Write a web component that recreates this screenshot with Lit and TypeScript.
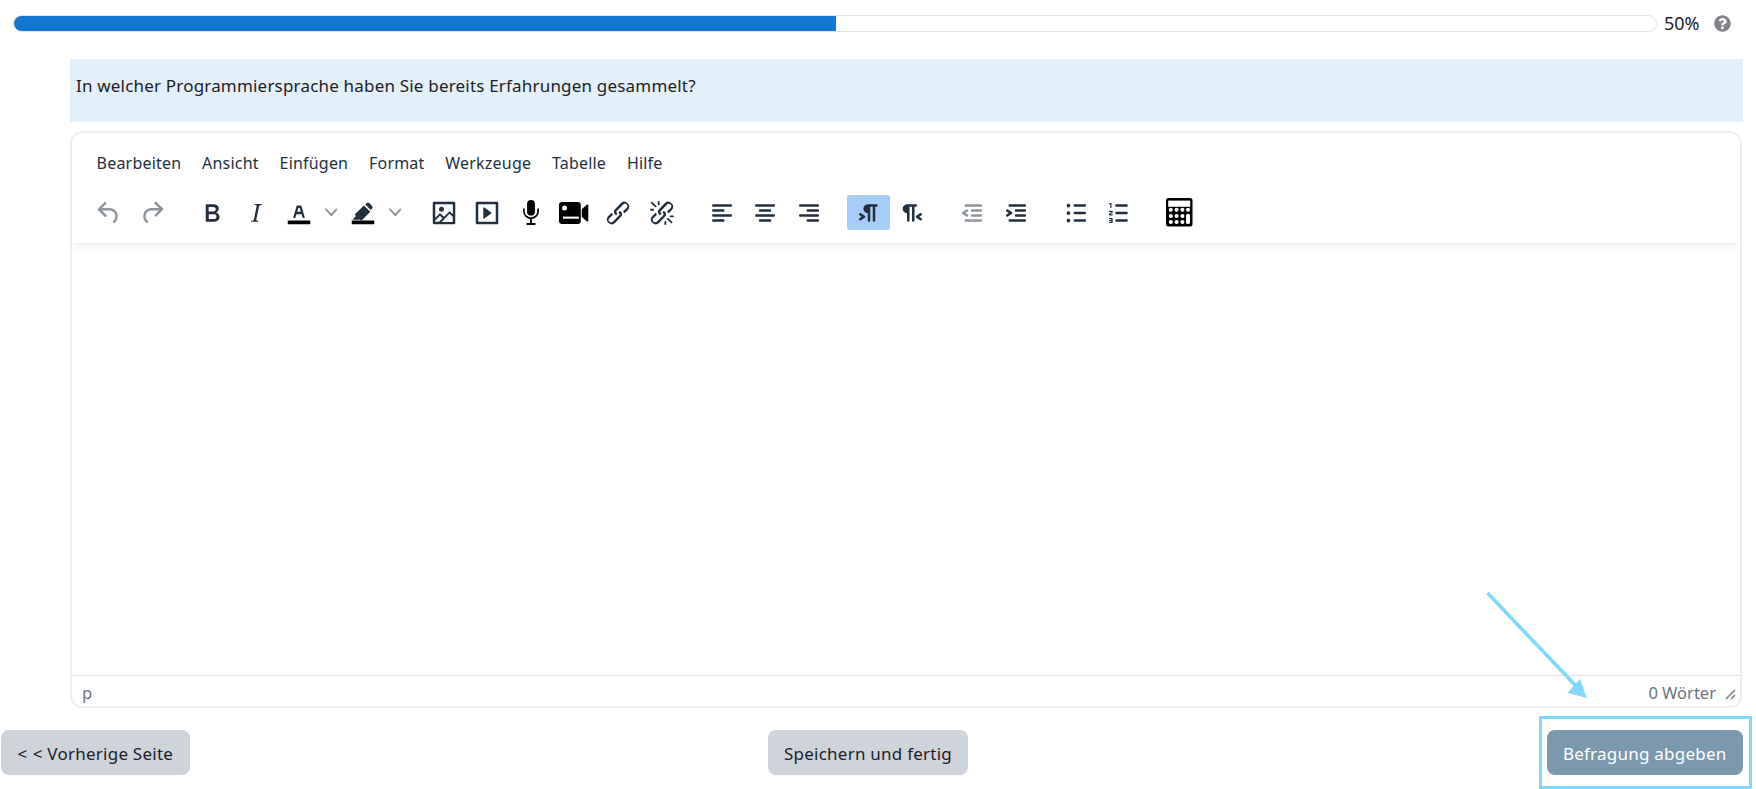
import { LitElement, html, css, svg } from "lit";
import { customElement } from "lit/decorators.js";

const P: Record<string, string> = {
  undo: "M6.4 8H12c3.7 0 6.2 2 6.8 5.1.6 2.7-.4 5.6-2.3 6.8a1 1 0 0 1-1-1.8c1.1-.6 1.8-2.7 1.4-4.6-.5-2.1-2.1-3.5-4.9-3.5H6.4l3.3 3.3a1 1 0 1 1-1.4 1.4l-5-5a1 1 0 0 1 0-1.4l5-5a1 1 0 0 1 1.4 1.4L6.4 8Z",
  redo: "M17.6 10H12c-2.8 0-4.4 1.4-4.9 3.5-.4 2 .3 4 1.4 4.6a1 1 0 1 1-1 1.8c-2-1.2-2.9-4.1-2.3-6.8.6-3 3-5.1 6.8-5.1h5.6l-3.3-3.3a1 1 0 1 1 1.4-1.4l5 5a1 1 0 0 1 0 1.4l-5 5a1 1 0 0 1-1.4-1.4l3.3-3.3Z",
  bold: "M7.8 19c-.3 0-.5 0-.6-.2l-.2-.5V5.7c0-.2 0-.4.2-.5l.6-.2h5c1.5 0 2.7.3 3.5 1 .7.6 1.1 1.4 1.1 2.5a3 3 0 0 1-.6 1.9c-.4.6-1 1-1.6 1.2.4.1.9.3 1.3.6s.8.7 1 1.2c.4.4.5 1 .5 1.6 0 1.3-.4 2.3-1.3 3-.8.7-2.1 1-3.8 1H7.8Zm5-8.3c.6 0 1.2-.1 1.6-.5.4-.3.6-.7.6-1.3 0-1.1-.8-1.7-2.3-1.7H9.3v3.5h3.4Zm.5 6c.7 0 1.3-.1 1.7-.4.4-.4.6-.9.6-1.5s-.2-1-.7-1.4c-.4-.3-1-.4-2-.4H9.4v3.8h4Z",
  italic: "M16.7 4.7l-.1.9h-.3c-.6 0-1 0-1.4.3-.3.3-.4.6-.5 1.1l-2.1 9.8v.6c0 .5.4.8 1.4.8h.2l-.2.8H8l.2-.8h.2c1.1 0 1.8-.5 2-1.5l2-9.8.1-.5c0-.6-.4-.8-1.4-.8h-.3l.2-.9h5.8Z",
  textcolor: "M8.7 16h-.8a.5.5 0 0 1-.5-.6l2.7-9c.1-.3.3-.4.5-.4h2.8c.2 0 .4.1.5.4l2.7 9a.5.5 0 0 1-.5.6h-.8a.5.5 0 0 1-.4-.4l-.7-2.2c0-.3-.3-.4-.5-.4h-3.4c-.2 0-.4.1-.5.4l-.7 2.2c0 .3-.2.4-.4.4Zm2.6-7.6-.6 2a.5.5 0 0 0 .5.6h1.6a.5.5 0 0 0 .5-.6l-.6-2c0-.3-.3-.4-.5-.4h-.4c-.2 0-.4.1-.5.4Z",
  pen: "M3.6 17.3 6.4 14.4 5.9 13.9a1 1 0 0 1 0-1.4L12.8 6l5 5-6.5 6.6a1 1 0 0 1-1.4 0l-.5-.5-.7.2H3.6Zm10.2-12.2.9-.9a1.8 1.8 0 0 1 2.5 0l1.9 1.9a1.8 1.8 0 0 1 0 2.5l-.9.9-4.4-4.4Z",
  image: "M5 15.7l3.3-3.2c.3-.3.7-.3 1 0L12 15l4.1-4c.3-.4.8-.4 1 0l2 1.9V5H5v10.7ZM5 18V19h3l2.8-2.9-2-2L5 17.9Zm14-3-2.5-2.4-6.4 6.5H19v-4ZM4 3h16c.6 0 1 .4 1 1v16c0 .6-.4 1-1 1H4a1 1 0 0 1-1-1V4c0-.6.4-1 1-1Zm6 8a2 2 0 1 0 0-4 2 2 0 0 0 0 4Z",
  play: "M4 3h16c.6 0 1 .4 1 1v16c0 .6-.4 1-1 1H4a1 1 0 0 1-1-1V4c0-.6.4-1 1-1Zm1 2v14h14V5H5Zm4.8 2.6 5.6 4a.5.5 0 0 1 0 .8l-5.6 4A.5.5 0 0 1 9 16V8a.5.5 0 0 1 .8-.4Z",
  link: "M6.2 12.3a1 1 0 0 1 1.4 1.4l-2 2a2 2 0 1 0 2.6 2.8l4.8-4.8a1 1 0 0 0 0-1.4 1 1 0 1 1 1.4-1.3 2.9 2.9 0 0 1 0 4L9.6 20a3.9 3.9 0 0 1-5.5-5.5l2-2Zm11.6-.6a1 1 0 0 1-1.4-1.4l2-2a2 2 0 1 0-2.6-2.8L11 10.3a1 1 0 0 0 0 1.4A1 1 0 1 1 9.6 13a2.9 2.9 0 0 1 0-4L14.4 4a3.9 3.9 0 0 1 5.5 5.5l-2 2Z",
  unlink: "M6.2 12.3a1 1 0 0 1 1.4 1.4l-2.1 2a2 2 0 1 0 2.7 2.8l4.8-4.8a1 1 0 0 0 0-1.4 1 1 0 1 1 1.4-1.3 2.9 2.9 0 0 1 0 4L9.6 20a3.9 3.9 0 0 1-5.5-5.5l2-2Zm11.6-.6a1 1 0 0 1-1.4-1.4l2.1-2a2 2 0 1 0-2.7-2.8L11 10.3a1 1 0 0 0 0 1.4A1 1 0 1 1 9.6 13a2.9 2.9 0 0 1 0-4L14.4 4a3.9 3.9 0 0 1 5.5 5.5l-2 2ZM7.6 6.3a.8.8 0 0 1-1 1.1L3.3 4.2a.7.7 0 1 1 1-1l3.2 3.1ZM5.1 8.6a.8.8 0 0 1 0 1.5H3a.8.8 0 0 1 0-1.5H5Zm5-3.5a.8.8 0 0 1-1.5 0V3a.8.8 0 0 1 1.5 0V5Zm6 11.8a.8.8 0 0 1 1-1l3.2 3.2a.8.8 0 0 1-1 1L16 17Zm-2.2 2a.8.8 0 0 1 1.5 0V21a.8.8 0 0 1-1.5 0V19Zm5-3.5a.7.7 0 1 1 0-1.5H21a.8.8 0 0 1 0 1.5H19Z",
  alignleft: "M5 5h14c.6 0 1 .4 1 1s-.4 1-1 1H5a1 1 0 1 1 0-2Zm0 4h8c.6 0 1 .4 1 1s-.4 1-1 1H5a1 1 0 1 1 0-2Zm0 8h8c.6 0 1 .4 1 1s-.4 1-1 1H5a1 1 0 0 1 0-2Zm0-4h14c.6 0 1 .4 1 1s-.4 1-1 1H5a1 1 0 0 1 0-2Z",
  aligncenter: "M5 5h14c.6 0 1 .4 1 1s-.4 1-1 1H5a1 1 0 1 1 0-2Zm3 4h8c.6 0 1 .4 1 1s-.4 1-1 1H8a1 1 0 1 1 0-2Zm0 8h8c.6 0 1 .4 1 1s-.4 1-1 1H8a1 1 0 0 1 0-2Zm-3-4h14c.6 0 1 .4 1 1s-.4 1-1 1H5a1 1 0 0 1 0-2Z",
  alignright: "M5 5h14c.6 0 1 .4 1 1s-.4 1-1 1H5a1 1 0 1 1 0-2Zm6 4h8c.6 0 1 .4 1 1s-.4 1-1 1h-8a1 1 0 0 1 0-2Zm0 8h8c.6 0 1 .4 1 1s-.4 1-1 1h-8a1 1 0 0 1 0-2Zm-6-4h14c.6 0 1 .4 1 1s-.4 1-1 1H5a1 1 0 0 1 0-2Z",
  ltr: "M11 5h7a1 1 0 0 1 0 2h-1v11a1 1 0 0 1-2 0V7h-2v11a1 1 0 0 1-2 0v-6c-.5 0-1 0-1.4-.3A3.4 3.4 0 0 1 7.8 10a3.3 3.3 0 0 1 0-2.8 3.4 3.4 0 0 1 1.8-1.8L11 5ZM4.4 16.2 6.2 15l-1.8-1.2a1 1 0 0 1 1.2-1.6l3 2a1 1 0 0 1 0 1.6l-3 2a1 1 0 1 1-1.2-1.6Z",
  rtl: "M8 5h7a1 1 0 0 1 0 2h-1v11a1 1 0 0 1-2 0V7h-2v11a1 1 0 0 1-2 0v-6c-.5 0-1 0-1.4-.3A3.4 3.4 0 0 1 4.8 10a3.3 3.3 0 0 1 0-2.8 3.4 3.4 0 0 1 1.8-1.8L8 5Zm11.6 11.2-1.8-1.2 1.8-1.2a1 1 0 0 0-1.2-1.6l-3 2a1 1 0 0 0 0 1.6l3 2a1 1 0 0 0 1.2-1.6Z",
  outdent: "M7 5h12c.6 0 1 .4 1 1s-.4 1-1 1H7a1 1 0 1 1 0-2Zm5 4h7c.6 0 1 .4 1 1s-.4 1-1 1h-7a1 1 0 0 1 0-2Zm0 4h7c.6 0 1 .4 1 1s-.4 1-1 1h-7a1 1 0 0 1 0-2Zm-5 4h12a1 1 0 0 1 0 2H7a1 1 0 0 1 0-2Zm1.6-3.8a1 1 0 0 1-1.2 1.6l-3-2a1 1 0 0 1 0-1.6l3-2a1 1 0 0 1 1.2 1.6L6.8 12l1.8 1.2Z",
  indent: "M7 5h12c.6 0 1 .4 1 1s-.4 1-1 1H7a1 1 0 1 1 0-2Zm5 4h7c.6 0 1 .4 1 1s-.4 1-1 1h-7a1 1 0 0 1 0-2Zm0 4h7c.6 0 1 .4 1 1s-.4 1-1 1h-7a1 1 0 0 1 0-2Zm-5 4h12a1 1 0 0 1 0 2H7a1 1 0 0 1 0-2Zm-2.6-3.8L6.2 12l-1.8-1.2a1 1 0 0 1 1.2-1.6l3 2a1 1 0 0 1 0 1.6l-3 2a1 1 0 1 1-1.2-1.6Z",
  ul: "M11 5h8c.6 0 1 .4 1 1s-.4 1-1 1h-8a1 1 0 0 1 0-2Zm0 6h8c.6 0 1 .4 1 1s-.4 1-1 1h-8a1 1 0 0 1 0-2Zm0 6h8c.6 0 1 .4 1 1s-.4 1-1 1h-8a1 1 0 0 1 0-2ZM4.5 6c0-.4.1-.8.4-1 .3-.4.7-.5 1.1-.5.4 0 .8.1 1 .4.4.3.5.7.5 1.1 0 .4-.1.8-.4 1-.3.4-.7.5-1.1.5-.4 0-.8-.1-1-.4-.4-.3-.5-.7-.5-1.1Zm0 6c0-.4.1-.8.4-1 .3-.4.7-.5 1.1-.5.4 0 .8.1 1 .4.4.3.5.7.5 1.1 0 .4-.1.8-.4 1-.3.4-.7.5-1.1.5-.4 0-.8-.1-1-.4-.4-.3-.5-.7-.5-1.1Zm0 6c0-.4.1-.8.4-1 .3-.4.7-.5 1.1-.5.4 0 .8.1 1 .4.4.3.5.7.5 1.1 0 .4-.1.8-.4 1-.3.4-.7.5-1.1.5-.4 0-.8-.1-1-.4-.4-.3-.5-.7-.5-1.1Z",
  ol: "M10 17h8c.6 0 1 .4 1 1s-.4 1-1 1h-8a1 1 0 0 1 0-2Zm0-6h8c.6 0 1 .4 1 1s-.4 1-1 1h-8a1 1 0 0 1 0-2Zm0-6h8c.6 0 1 .4 1 1s-.4 1-1 1h-8a1 1 0 1 1 0-2ZM6 4v3.5c0 .3-.2.5-.5.5a.5.5 0 0 1-.5-.5V5h-.5a.5.5 0 0 1 0-1H6Zm-1 8.8.2.2h1.3c.3 0 .5.2.5.5s-.2.5-.5.5H4.9a1 1 0 0 1-.9-1V13c0-.4.3-.8.6-1l1.2-.4.2-.3a.2.2 0 0 0-.2-.2H4.5a.5.5 0 0 1-.5-.5c0-.3.2-.5.5-.5h1.6c.5 0 .9.4.9 1v.1c0 .4-.3.8-.6 1l-1.2.4-.2.3ZM7 17v2c0 .6-.4 1-1 1H4.5a.5.5 0 0 1 0-1h1.2c.2 0 .3-.1.3-.3 0-.2-.1-.3-.3-.3H4.4a.4.4 0 1 1 0-.8h1.3c.2 0 .3-.1.3-.3 0-.2-.1-.3-.3-.3H4.5a.5.5 0 1 1 0-1H6c.6 0 1 .4 1 1Z",
};

const icon = (name: string, bar = false) => html`<svg class="ic" viewBox="0 0 24 24">
  ${bar ? svg`<rect x="3" y="18" width="18" height="3" fill="#000"></rect>` : ""}
  <path fill-rule="evenodd" d=${P[name]}></path>
</svg>`;

const chevron = html`<svg class="chev" viewBox="0 0 10 10"><path d="M8.7 2.2c.3-.3.8-.3 1 0 .4.2.4.7 0 1L5.7 7.8c-.3.3-.9.3-1.2 0L.2 3.2c-.3-.3-.3-.8 0-1.1.3-.2.8-.3 1.1 0L5 6l3.7-3.8Z"></path></svg>`;

const mic = html`<svg class="mic" viewBox="0 0 16 25">
  <rect x="4.1" y="0" width="7.8" height="15.6" rx="3.9" fill="#000"></rect>
  <path d="M.9 9.2v2a7.1 7.1 0 0 0 14.2 0v-2" fill="none" stroke="#000" stroke-width="1.7" stroke-linecap="round"></path>
  <rect x="7.1" y="18" width="1.8" height="6" fill="#000"></rect>
  <rect x="3.4" y="23" width="9.2" height="1.9" rx=".6" fill="#000"></rect>
</svg>`;

const camera = html`<svg class="cam" viewBox="0 0 30 22">
  <rect x="0" y="0" width="21.8" height="22" rx="3" fill="#000"></rect>
  <path d="M22.8 7.2 27.9 2.6c.6-.5 1.4-.1 1.4.6v15.6c0 .7-.8 1.1-1.4.6l-5.1-4.6Z" fill="#000"></path>
  <circle cx="5.6" cy="6" r="2.5" fill="#fff"></circle>
  <rect x="4" y="14.6" width="15.8" height="2.1" fill="#fff"></rect>
</svg>`;

const keyX = [4.8, 10.6, 16.4];
const keyY = [11.8, 18, 24];
const calc = html`<svg class="calc" viewBox="0 0 26.5 28.5">
  <rect width="26.5" height="28.5" rx="2.5" fill="#000"></rect>
  <rect x="2.2" y="2.6" width="22" height="6.2" fill="#fff"></rect>
  ${keyY.flatMap((y) => keyX.map((x) => svg`<circle cx=${x} cy=${y} r="2.05" fill="#fff"></circle>`))}
  <circle cx="22" cy="11.8" r="2.05" fill="#fff"></circle>
  <rect x="20" y="15.8" width="4" height="10.2" rx="1.6" fill="#fff"></rect>
</svg>`;

const menus = ["Bearbeiten", "Ansicht", "Einfügen", "Format", "Werkzeuge", "Tabelle", "Hilfe"];

@customElement("app-root")
export class AppRoot extends LitElement {
  static styles = css`
    :host {
      display: block;
      width: 1756px;
      height: 789px;
      box-sizing: border-box;
      padding: 15px 13px 0 0;
      overflow: hidden;
      background: #fff;
      font-family: "Noto Sans", "Open Sans", sans-serif;
      color: #1d2125;
    }
    .progress-row {
      display: flex;
      align-items: center;
      height: 17px;
      margin-left: 13px;
    }
    .track {
      flex: 1;
      height: 17px;
      box-sizing: border-box;
      border: 1px solid #e2e2e2;
      border-radius: 9px;
      overflow: hidden;
      background: #fff;
    }
    .fill {
      height: 100%;
      background: #1177d1;
    }
    .pct {
      margin-left: 7px;
      width: 57px;
      font-size: 18px;
      line-height: 17px;
    }
    .help {
      width: 17px;
      height: 17px;
      fill: #808488;
      margin-right: 12px;
      margin-left: -7px;
      flex: none;
    }
    .content {
      margin: 27px 0 0 70px;
    }
    .question {
      height: 63px;
      box-sizing: border-box;
      padding: 14px 6px 0;
      background: #e3eff9;
      font-size: 17px;
      line-height: 26px;
      letter-spacing: 0.19px;
    }
    .editor {
      margin-top: 9px;
      margin-right: 1px;
      height: 577px;
      box-sizing: border-box;
      border: 2px solid #eeeeee;
      border-radius: 12px;
      display: flex;
      flex-direction: column;
      background: #fff;
    }
    .header {
      height: 110px;
      box-sizing: border-box;
      padding-top: 13px;
      box-shadow: 0 2px 2px -2px rgba(34, 47, 62, 0.1), 0 8px 8px -4px rgba(34, 47, 62, 0.07);
      border-radius: 10px 10px 0 0;
    }
    .menubar {
      display: flex;
      height: 32px;
      box-sizing: border-box;
      padding: 2px 0 0 24.6px;
      gap: 20.8px;
      align-items: center;
      font-size: 16px;
      letter-spacing: 0.2px;
      color: #222f3e;
    }
    .toolbar {
      display: flex;
      margin-top: 17px;
      padding-left: 14.8px;
      gap: 16.35px;
    }
    .group {
      display: flex;
    }
    .btn {
      width: 43.6px;
      height: 35px;
      display: flex;
      align-items: center;
      justify-content: center;
      border-radius: 3px;
      fill: #222f3e;
    }
    .btn.active {
      background: #a6ccf7;
    }
    .btn.disabled {
      opacity: 0.5;
    }
    .btn.split {
      width: 43px;
    }
    .btn.caret {
      width: 21px;
      opacity: 0.5;
    }
    .ic {
      width: 30px;
      height: 30px;
      flex: none;
    }
    .chev {
      width: 12.5px;
      height: 12.5px;
    }
    .mic {
      width: 16px;
      height: 25px;
    }
    .cam {
      width: 30px;
      height: 22px;
    }
    .calc {
      width: 26.5px;
      height: 28.5px;
    }
    .body {
      flex: 1;
    }
    .status {
      height: 31px;
      box-sizing: border-box;
      border-top: 1px solid #e3e3e3;
      display: flex;
      align-items: center;
      padding: 3px 4px 0 10px;
      font-size: 16.5px;
      color: #6a7380;
    }
    .words {
      margin-left: auto;
      margin-right: 9px;
    }
    .grip {
      width: 11px;
      height: 11px;
      margin-top: 3px;
      stroke: #7f8790;
      stroke-width: 1.7;
    }
    .actions {
      display: flex;
      justify-content: space-between;
      margin: 22px 0 0 -69px;
      position: relative;
    }
    .action {
      height: 45px;
      box-sizing: border-box;
      padding: 2px 16.4px 0;
      display: flex;
      align-items: center;
      border-radius: 8px;
      background: #ced4da;
      font-size: 17px;
      letter-spacing: 0.24px;
      color: #1d2125;
      white-space: pre;
    }
    .wide-lt {
      letter-spacing: 5.6px;
    }
    .submit-wrap {
      position: relative;
    }
    .submit {
      background: #7c98ac;
      color: #fff;
    }
    .highlight {
      position: absolute;
      left: -8px;
      right: -9px;
      top: -14px;
      height: 73px;
      box-sizing: border-box;
      border: 3.5px solid #80d8ff;
      pointer-events: none;
    }
    .arrow {
      position: absolute;
      left: 1480px;
      top: 585px;
      width: 115px;
      height: 120px;
      pointer-events: none;
    }
  `;

  render() {
    return html`
      <div class="progress-row">
        <div class="track"><div class="fill" style="width:${(823 / 1643) * 100}%"></div></div>
        <span class="pct">50%</span>
        <svg class="help" viewBox="0 0 512 512"><path d="M504 256c0 136.997-111.043 248-248 248S8 392.997 8 256C8 119.083 119.043 8 256 8s248 111.083 248 248zM262.655 90c-54.497 0-89.255 22.957-116.549 63.758-3.536 5.286-2.353 12.415 2.715 16.258l34.699 26.31c5.205 3.947 12.621 3.008 16.665-2.122 17.864-22.658 30.113-35.797 57.303-35.797 20.429 0 45.698 13.148 45.698 32.958 0 14.976-12.363 22.667-32.534 33.976C247.128 238.528 216 254.941 216 296v4c0 6.627 5.373 12 12 12h56c6.627 0 12-5.373 12-12v-1.333c0-28.462 83.186-29.647 83.186-106.667 0-58.002-60.165-102-116.531-102zM256 338c-25.365 0-46 20.635-46 46 0 25.364 20.635 46 46 46s46-20.636 46-46c0-25.365-20.635-46-46-46z"></path></svg>
      </div>
      <div class="content">
        <div class="question">In welcher Programmiersprache haben Sie bereits Erfahrungen gesammelt?</div>
        <div class="editor">
          <div class="header">
            <div class="menubar">${menus.map((m) => html`<span>${m}</span>`)}</div>
            <div class="toolbar">
              <div class="group">
                <div class="btn disabled">${icon("undo")}</div>
                <div class="btn disabled">${icon("redo")}</div>
              </div>
              <div class="group">
                <div class="btn">${icon("bold")}</div>
                <div class="btn">${icon("italic")}</div>
                <div class="btn split">${icon("textcolor", true)}</div>
                <div class="btn caret">${chevron}</div>
                <div class="btn split">${icon("pen", true)}</div>
                <div class="btn caret">${chevron}</div>
              </div>
              <div class="group">
                <div class="btn">${icon("image")}</div>
                <div class="btn">${icon("play")}</div>
                <div class="btn">${mic}</div>
                <div class="btn">${camera}</div>
                <div class="btn">${icon("link")}</div>
                <div class="btn">${icon("unlink")}</div>
              </div>
              <div class="group">
                <div class="btn">${icon("alignleft")}</div>
                <div class="btn">${icon("aligncenter")}</div>
                <div class="btn">${icon("alignright")}</div>
              </div>
              <div class="group">
                <div class="btn active">${icon("ltr")}</div>
                <div class="btn">${icon("rtl")}</div>
              </div>
              <div class="group">
                <div class="btn disabled">${icon("outdent")}</div>
                <div class="btn">${icon("indent")}</div>
              </div>
              <div class="group">
                <div class="btn">${icon("ul")}</div>
                <div class="btn">${icon("ol")}</div>
              </div>
              <div class="group">
                <div class="btn">${calc}</div>
              </div>
            </div>
          </div>
          <div class="body"></div>
          <div class="status">
            <span>p</span>
            <span class="words">0 Wörter</span>
            <svg class="grip" viewBox="0 0 11 11"><path d="M10 1 1 10M10 6 6 10" fill="none"></path></svg>
          </div>
        </div>
        <div class="actions">
          <div class="action"><span><span class="wide-lt">&lt;</span>&lt; Vorherige Seite</span></div>
          <div class="action">Speichern und fertig</div>
          <div class="submit-wrap">
            <div class="action submit">Befragung abgeben</div>
            <div class="highlight"></div>
          </div>
        </div>
      </div>
      <svg class="arrow" viewBox="0 0 115 120">
        <path d="M7.5 8 96 101" stroke="#80d8ff" stroke-width="3.6" fill="none"></path>
        <path d="M106.7 113 87.7 107.7 100 94Z" fill="#80d8ff"></path>
      </svg>
    `;
  }
}
